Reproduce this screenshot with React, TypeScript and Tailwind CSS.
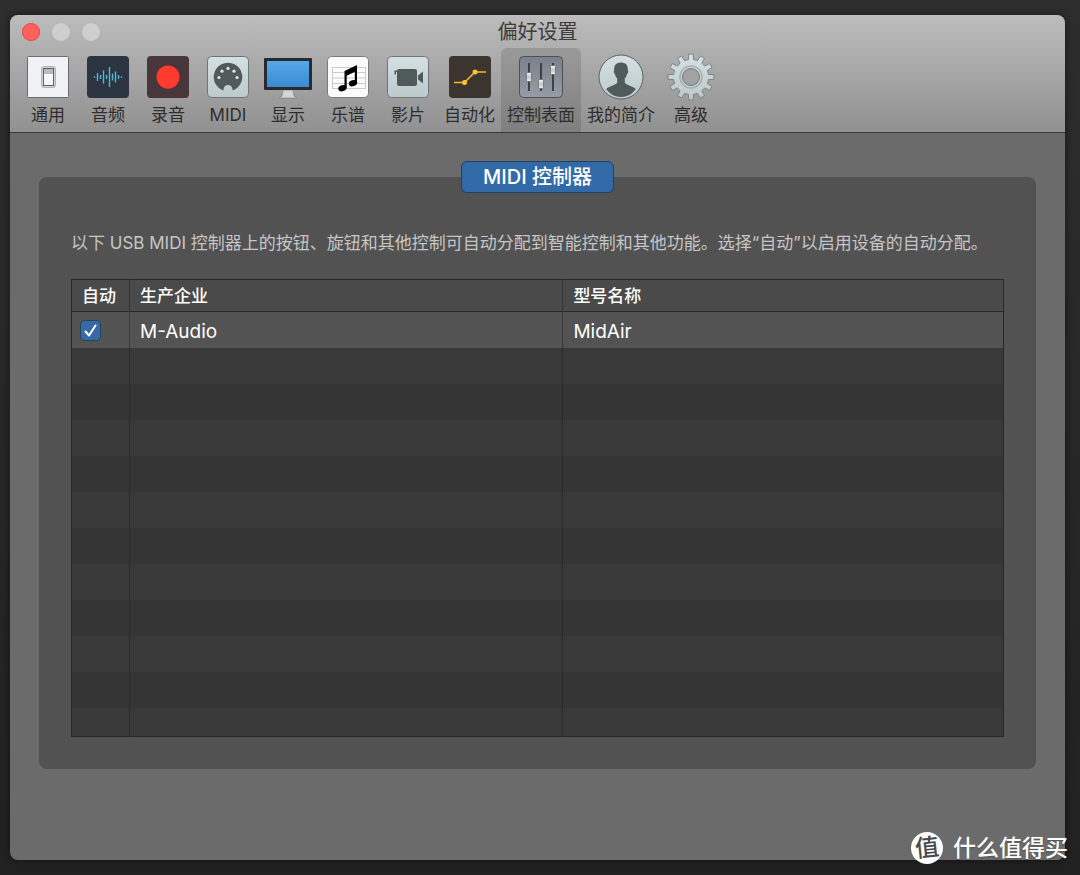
import type { ReactNode } from "react";

type ToolbarItem = { label: string; icon: ReactNode; active?: boolean };

// One tooth every 30 degrees, slightly narrower at the tip
const gearPoints = Array.from({ length: 12 }, (_, i) => {
  const base = (i * 30 - 90) * (Math.PI / 180);
  return [
    [-0.15, 17.5],
    [-0.1, 23],
    [0.1, 23],
    [0.15, 17.5],
    [0.26, 17.5],
  ]
    .map(([offset, r]) => {
      const a = base + offset;
      return `${(24 + r * Math.cos(a)).toFixed(2)},${(24 + r * Math.sin(a)).toFixed(2)}`;
    })
    .join(" ");
}).join(" ");

function IconGradients() {
  return (
    <svg className="absolute size-0" aria-hidden="true">
      <defs>
        <linearGradient id="pale" x1="0" y1="0" x2="0" y2="1">
          <stop offset="0" stopColor="#d5e0e1" />
          <stop offset="1" stopColor="#bccacc" />
        </linearGradient>
        <linearGradient id="screen" x1="0" y1="0" x2="0" y2="1">
          <stop offset="0" stopColor="#55a8e8" />
          <stop offset="1" stopColor="#3a8bd2" />
        </linearGradient>
        <linearGradient id="steel" x1="0" y1="0" x2="0" y2="1">
          <stop offset="0" stopColor="#7b818a" />
          <stop offset="1" stopColor="#969ca6" />
        </linearGradient>
        <linearGradient id="knob" x1="0" y1="0" x2="0" y2="1">
          <stop offset="0" stopColor="#f4f4f4" />
          <stop offset="0.5" stopColor="#c4c6c8" />
          <stop offset="1" stopColor="#eeeeee" />
        </linearGradient>
      </defs>
    </svg>
  );
}

function Icon({ children }: { children: ReactNode }) {
  return (
    <svg viewBox="0 0 48 48" className="size-12" aria-hidden="true">
      {children}
    </svg>
  );
}

const items: ToolbarItem[] = [
  {
    label: "通用",
    icon: (
      <Icon>
        <rect x="3.5" y="3.5" width="41" height="41" rx="1" fill="#f1f2f6" stroke="#6c6c6e" />
        <rect x="17.5" y="13.5" width="14" height="21" rx="2" fill="#cfd1d2" stroke="#b3b5b6" />
        <rect x="19.5" y="15.5" width="10" height="17" fill="#f6f7f8" stroke="#5c6062" />
        <rect x="20" y="16" width="9" height="5" fill="#b9bcbe" />
      </Icon>
    ),
  },
  {
    label: "音频",
    icon: (
      <Icon>
        <rect x="3" y="3" width="42" height="42" rx="4" fill="#2b3440" />
        <path
          d="M10.5 23.3v1.4M13.500 20v8M16.500 22v4M19.500 17.500v13M22.500 22v4M25.500 14v20M28.500 20.500v7M31.500 18.500v11M34.500 22v4M37.500 23.300v1.400"
          stroke="#4eb9dc"
          strokeWidth="1.4"
        />
      </Icon>
    ),
  },
  {
    label: "录音",
    icon: (
      <Icon>
        <rect x="3" y="3" width="42" height="42" rx="4" fill="#47363a" />
        <circle cx="24" cy="24" r="11.5" fill="#ff3b30" />
      </Icon>
    ),
  },
  {
    label: "MIDI",
    icon: (
      <Icon>
        <rect x="3.5" y="3.5" width="41" height="41" rx="4" fill="url(#pale)" stroke="#6e7778" />
        <path d="M19.5 37.5A14.3 14.3 0 1 1 28.5 37.5L28.5 36.5A4.5 4.5 0 0 0 19.5 36.5Z" fill="#515a5a" />
        <g fill="#dce5e6">
          <circle cx="15" cy="24.5" r="1.6" />
          <circle cx="18" cy="18.2" r="1.6" />
          <circle cx="24" cy="15.4" r="1.6" />
          <circle cx="30" cy="18.2" r="1.6" />
          <circle cx="33" cy="24.5" r="1.6" />
        </g>
      </Icon>
    ),
  },
  {
    label: "显示",
    icon: (
      <Icon>
        <path d="M19 37h10l1 6 3 2H15l3-2z" fill="#d4d4d4" stroke="#77797a" strokeWidth="0.6" />
        <rect x="0" y="5" width="48" height="32" rx="1" fill="#272b2f" />
        <rect x="3" y="8" width="42" height="26" fill="url(#screen)" />
      </Icon>
    ),
  },
  {
    label: "乐谱",
    icon: (
      <Icon>
        <rect x="3.5" y="3.5" width="41" height="41" rx="4" fill="#fbfbfb" stroke="#7a7a7a" />
        <path d="M8 14.5h34M8 19.5h34M8 25h34M8 30.5h34M8 35.5h34M8.5 14.5v21M41.5 14.5v21" stroke="#cbcbcb" fill="none" />
        <path d="M20.500 18L33 12V17.800L22.700 22.800V34.500H20.500Z" fill="#000" />
        <path d="M30.800 14H33v16h-2.200z" fill="#000" />
        <ellipse cx="18.500" cy="35.200" rx="4.300" ry="3" transform="rotate(-18 18.500 35.200)" fill="#000" />
        <ellipse cx="29" cy="30.200" rx="4.300" ry="3" transform="rotate(-18 29 30.200)" fill="#000" />
      </Icon>
    ),
  },
  {
    label: "影片",
    icon: (
      <Icon>
        <rect x="3.5" y="3.5" width="41" height="41" rx="4" fill="url(#pale)" stroke="#6e7778" />
        <rect x="13" y="16" width="20" height="17" rx="2" fill="#515a5a" />
        <path d="M34 22.500L39 18.500V30.500L34 26.500ZM10.500 17.500H13V19h-1v2.500h-1.500z" fill="#515a5a" />
      </Icon>
    ),
  },
  {
    label: "自动化",
    icon: (
      <Icon>
        <rect x="3" y="3" width="42" height="42" rx="4" fill="#3c352f" />
        <path d="M8 29.5H18.5L29 19H40" stroke="#f0bb30" strokeWidth="1.5" fill="none" />
        <circle cx="18.5" cy="29.5" r="2.5" fill="#f8c534" />
        <circle cx="29" cy="19" r="2.5" fill="#f8c534" />
      </Icon>
    ),
  },
  {
    label: "控制表面",
    active: true,
    icon: (
      <Icon>
        <rect x="2.5" y="3.5" width="43" height="41" rx="4" fill="url(#steel)" stroke="#4c5159" />
        <path d="M12 10v28M24 10v28M36 10v28" stroke="#3c4148" strokeWidth="2" />
        <rect x="9.5" y="19.5" width="5" height="9" rx="1" fill="url(#knob)" stroke="#555a60" strokeWidth="0.6" />
        <rect x="21.5" y="26.5" width="5" height="9" rx="1" fill="url(#knob)" stroke="#555a60" strokeWidth="0.6" />
        <rect x="33.5" y="12.5" width="5" height="9" rx="1" fill="url(#knob)" stroke="#555a60" strokeWidth="0.6" />
      </Icon>
    ),
  },
  {
    label: "我的简介",
    icon: (
      <Icon>
        <circle cx="24" cy="24" r="22" fill="url(#pale)" stroke="#596263" />
        <path
          d="M24 9.5c-5 0-7.2 3-6.8 7.5-.9.8-.3 3.5.8 4.2.5 2.200 1.400 3.500 2.200 4.300v4.200c-1.300 2.500-8.500 3.300-11 6.300C12.500 41 18 44 24 44s11.500-3 14.800-8c-2.500-3-9.700-3.800-11-6.300v-4.200c.8-.8 1.700-2.100 2.200-4.300 1.100-.7 1.700-3.400.8-4.200.4-4.500-1.800-7.500-6.800-7.500z"
          fill="#515a5a"
        />
      </Icon>
    ),
  },
  {
    label: "高级",
    icon: (
      <Icon>
        <polygon points={gearPoints} fill="url(#pale)" stroke="#6f7779" strokeWidth="0.8" strokeLinejoin="round" />
        <circle cx="24" cy="24" r="11" fill="none" stroke="#a5b0b2" strokeWidth="1.5" />
        <circle cx="24" cy="24" r="8.5" fill="#a2a2a2" stroke="#6f7779" />
      </Icon>
    ),
  },
];

function Toolbar() {
  return (
    <header className="border-b border-[#3a3a3a] bg-linear-to-b from-[#bcbcbc] to-[#919191]">
      <div className="grid grid-cols-[1fr_auto_1fr] items-center px-3 pt-px">
        <div className="flex items-center gap-3">
          <button aria-label="关闭" className="size-[18px] rounded-full bg-[#fc615c] ring-1 ring-[#e0504b] ring-inset" />
          <button aria-label="最小化" disabled className="size-[18px] rounded-full bg-[#cfcfcf]" />
          <button aria-label="缩放" disabled className="size-[18px] rounded-full bg-[#cfcfcf]" />
        </div>
        <h1 className="text-xl leading-8 text-[#3c3c3c]">偏好设置</h1>
      </div>
      <nav className="flex pl-2">
        {items.map((item) => (
          <button
            key={item.label}
            aria-pressed={!!item.active}
            className={`flex min-w-[60px] flex-col items-center rounded-t-md px-1.5 pt-[5px] pb-[3px] text-[17px] leading-7 text-[#2d2d2d] ${
              item.active ? "bg-black/12" : ""
            }`}
          >
            {item.icon}
            {item.label}
          </button>
        ))}
      </nav>
    </header>
  );
}

function ControllerTable() {
  return (
    <table className="w-full table-fixed border-collapse border border-[#282828] text-left text-white">
      <colgroup>
        <col className="w-[58px]" />
        <col className="w-[46.5%]" />
        <col />
      </colgroup>
      <thead>
        <tr className="h-8 border-b border-[#282828] bg-[#4a4a4a] text-[17px] leading-6">
          <th className="border-r border-[#333333] px-2.5 py-0 font-medium">自动</th>
          <th className="border-r border-[#333333] px-2.5 py-0 font-medium">生产企业</th>
          <th className="px-2.5 py-0 font-medium">型号名称</th>
        </tr>
      </thead>
      <tbody>
        <tr className="h-9 bg-[#535353] text-[19px] leading-8">
          <td className="border-r border-[#3a3a3a] px-2 py-0">
            <label className="relative block size-[21px]">
              <input
                type="checkbox"
                defaultChecked
                aria-label="自动分配 MidAir"
                className="peer block size-[21px] appearance-none rounded-[4px] border border-[#27425f] bg-[#5b5b5b] checked:bg-[#366aa6]"
              />
              <svg viewBox="0 0 21 21" className="pointer-events-none absolute inset-0 hidden peer-checked:block" aria-hidden="true">
                <path d="M5.5 11.5L9 15.5L15.5 5.5" fill="none" stroke="#fff" strokeWidth="2" strokeLinecap="round" strokeLinejoin="round" />
              </svg>
            </label>
          </td>
          <td className="border-r border-[#3a3a3a] px-2.5 pt-1 pb-0">M-Audio</td>
          <td className="px-2.5 pt-1 pb-0">MidAir</td>
        </tr>
        {Array.from({ length: 11 }, (_, i) => (
          <tr key={i} className="h-9 last:h-7 even:bg-[#393939] odd:bg-[#353535]">
            <td className="border-r border-[#2a2a2a] p-0" />
            <td className="border-r border-[#2a2a2a] p-0" />
            <td className="p-0" />
          </tr>
        ))}
      </tbody>
    </table>
  );
}

export default function App() {
  return (
    <div className="relative flex min-h-screen bg-linear-to-b from-[#2e2e2e] to-[#222222] pt-[15px] pr-[15px] pb-[15px] pl-2.5 font-['Inter','Noto_Sans_CJK_SC',sans-serif]">
      <IconGradients />
      <div className="flex flex-1 flex-col overflow-hidden rounded-lg bg-[#6b6b6b] shadow-[0_0_10px_rgba(0,0,0,0.5)]">
        <Toolbar />
        <main className="px-[29px] pt-7 pb-10">
          <section className="mt-4 rounded-lg bg-[#525252] px-8 pb-8">
            <div className="flex justify-center">
              <button className="-mt-4 h-8 rounded-md border border-[#24415f] bg-[#326aa8] px-[21px] text-xl leading-7 font-medium text-white">
                MIDI 控制器
              </button>
            </div>
            <p className="pt-9 pb-[22px] text-[17px] leading-7 text-[#c6c6c6]">
              以下 USB MIDI 控制器上的按钮、旋钮和其他控制可自动分配到智能控制和其他功能。选择“自动”以启用设备的自动分配。
            </p>
            <ControllerTable />
          </section>
        </main>
      </div>
      <div className="absolute right-3 bottom-[11px] flex items-center gap-2.5 text-white">
        <span className="flex size-8 items-center justify-center rounded-full bg-white text-2xl leading-8 text-[#4a4a4a]">
          <span className="-rotate-6 font-medium">值</span>
        </span>
        <span className="text-[23px] leading-8 font-medium text-shadow-sm">什么值得买</span>
      </div>
    </div>
  );
}
